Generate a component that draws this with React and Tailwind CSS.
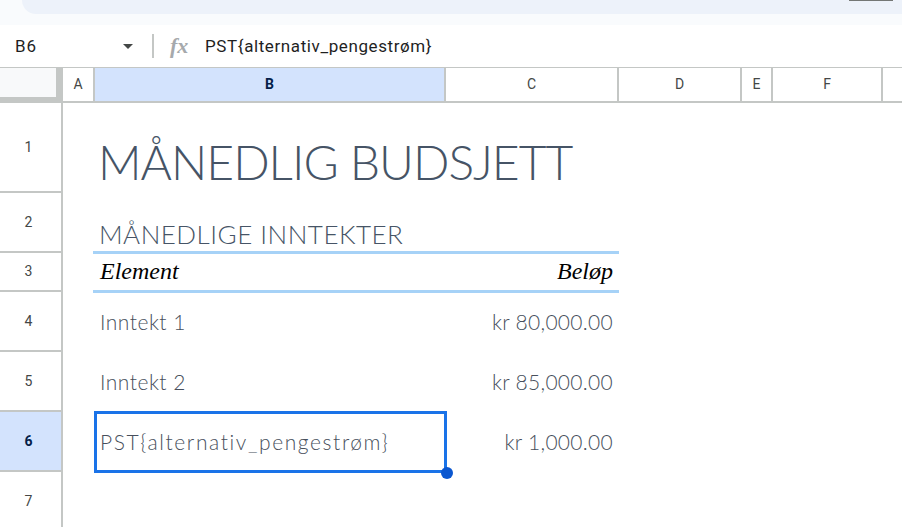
import React from 'react'

// Column widths include the 2px right border of each header cell
const columns = [
  { key: 'A', w: 'w-[32px]' },
  { key: 'B', w: 'w-[351px]', active: true },
  { key: 'C', w: 'w-[173px]' },
  { key: 'D', w: 'w-[123px]' },
  { key: 'E', w: 'w-[31px]' },
  { key: 'F', w: 'w-[110px]' },
]

const rowHeaders = [
  { n: 1, h: 'h-[90px]' },
  { n: 2, h: 'h-[60px]' },
  { n: 3, h: 'h-[39px]' },
  { n: 4, h: 'h-[60px]' },
  { n: 5, h: 'h-[60px]' },
  { n: 6, h: 'h-[60px]', active: true },
  { n: 7, h: 'h-[60px]' },
]

const income = [
  { label: 'Inntekt 1', amount: 'kr 80,000.00', track: 'tracking-[0.5px]' },
  { label: 'Inntekt 2', amount: 'kr 85,000.00', track: 'tracking-[0.5px]' },
  { label: 'PST{alternativ_pengestrøm}', amount: 'kr 1,000.00', track: 'tracking-[1.6px]', selected: true },
]

const uiFont = { fontFamily: 'Roboto, "Liberation Sans", sans-serif' }
const docFont = { fontFamily: 'Lato, "Open Sans", sans-serif' }
const serifFont = { fontFamily: '"Liberation Serif", serif' }

const TopStrip = () => (
  <div className="h-[25px] bg-[#f9fbfd]">
    <div className="ml-[22px] h-[14px] rounded-bl-[16px] bg-[#edf2fa] flex justify-end pr-[9px]">
      <div className="w-[44px] h-[1px] bg-[#747775]" />
    </div>
  </div>
)

const FormulaBar = () => (
  <div className="h-[42px] bg-white flex items-center pl-[15px]" style={uiFont}>
    <div className="w-[108px] text-[17px] leading-none tracking-[1px] text-[#1f1f1f]">B6</div>
    <div className="w-0 h-0 border-l-[5px] border-r-[5px] border-t-[5px] border-l-transparent border-r-transparent border-t-[#444746]" />
    <div className="ml-[19px] w-[2px] h-[24px] bg-[#c4c7c5]" />
    <div
      className="ml-[16px] w-[20px] text-[22px] leading-none italic font-bold text-[#a6a9ac]"
      style={serifFont}
    >
      fx
    </div>
    <div className="ml-[15px] text-[17px] leading-none tracking-[0.6px] text-[#1f1f1f] whitespace-nowrap">
      PST{'{'}alternativ_pengestrøm{'}'}
    </div>
  </div>
)

const ColumnHeaders = () => (
  <div className="flex h-[36px] border-t border-[#c4c7c5]" style={uiFont}>
    <div className="w-[63px] h-full bg-[#c4c7c5]">
      <div className="w-[56px] h-[29px] bg-[#f8f9fa]" />
    </div>
    {columns.map((c) => (
      <div
        key={c.key}
        className={`${c.w} h-full flex items-center justify-center border-r-2 border-b-2 border-[#c4c7c5] text-[14px] ${
          c.active ? 'bg-[#d3e3fd] font-bold text-[#041e49]' : 'bg-white text-[#444746]'
        }`}
      >
        {c.key}
      </div>
    ))}
    <div className="flex-1 h-full border-b-2 border-[#c4c7c5] bg-white" />
  </div>
)

const RowHeaders = () => (
  <div className="w-[63px] border-r-2 border-[#c4c7c5] flex flex-col" style={uiFont}>
    {rowHeaders.map((r) => (
      <div
        key={r.n}
        className={`${r.h} shrink-0 flex items-center justify-center pr-[4px] border-b-2 border-[#c4c7c5] text-[14px] ${
          r.active ? 'bg-[#d3e3fd] font-bold text-[#041e49]' : 'bg-white text-[#444746]'
        }`}
      >
        {r.n}
      </div>
    ))}
  </div>
)

const Budget = () => (
  <div className="flex-1 pl-[30px]">
    <div className="w-[526px]">
      <div className="h-[90px] pt-[35px] pl-[5px]">
        <div
          className="text-[48px] leading-none font-light tracking-[-1px] text-[#465466] whitespace-nowrap"
          style={docFont}
        >
          MÅNEDLIG BUDSJETT
        </div>
      </div>

      <div className="h-[61px] pt-[28px] pl-[6px] border-b-[3px] border-[#a6d2f7]">
        <div
          className="text-[26px] leading-none font-light tracking-[0.5px] text-[#465466] whitespace-nowrap"
          style={docFont}
        >
          MÅNEDLIGE INNTEKTER
        </div>
      </div>

      <div
        className="h-[39px] pt-[5px] pl-[7px] pr-[6px] flex justify-between border-b-[3px] border-[#a6d2f7] text-[24px] leading-none italic text-black"
        style={serifFont}
      >
        <span>Element</span>
        <span>Beløp</span>
      </div>

      {income.map((row) => (
        <div
          key={row.label}
          className="relative h-[60px] pt-[18px] pl-[7px] pr-[6px] flex justify-between text-[21px] leading-none font-light text-[#474f5c] whitespace-nowrap"
          style={docFont}
        >
          <span className={row.track}>{row.label}</span>
          <span className="tracking-[0.3px]">{row.amount}</span>
          {row.selected && (
            <>
              <div className="absolute left-[1px] top-[-2px] w-[353px] h-[62px] border-[3px] border-[#1a73e8]" />
              <div className="absolute left-[348px] top-[54px] w-[12px] h-[12px] rounded-full bg-[#0b57d0]" />
            </>
          )}
        </div>
      ))}
    </div>
  </div>
)

export default function App() {
  return (
    <div className="w-[902px] h-[527px] overflow-hidden bg-white">
      <TopStrip />
      <FormulaBar />
      <ColumnHeaders />
      <div className="flex">
        <RowHeaders />
        <Budget />
      </div>
    </div>
  )
}
